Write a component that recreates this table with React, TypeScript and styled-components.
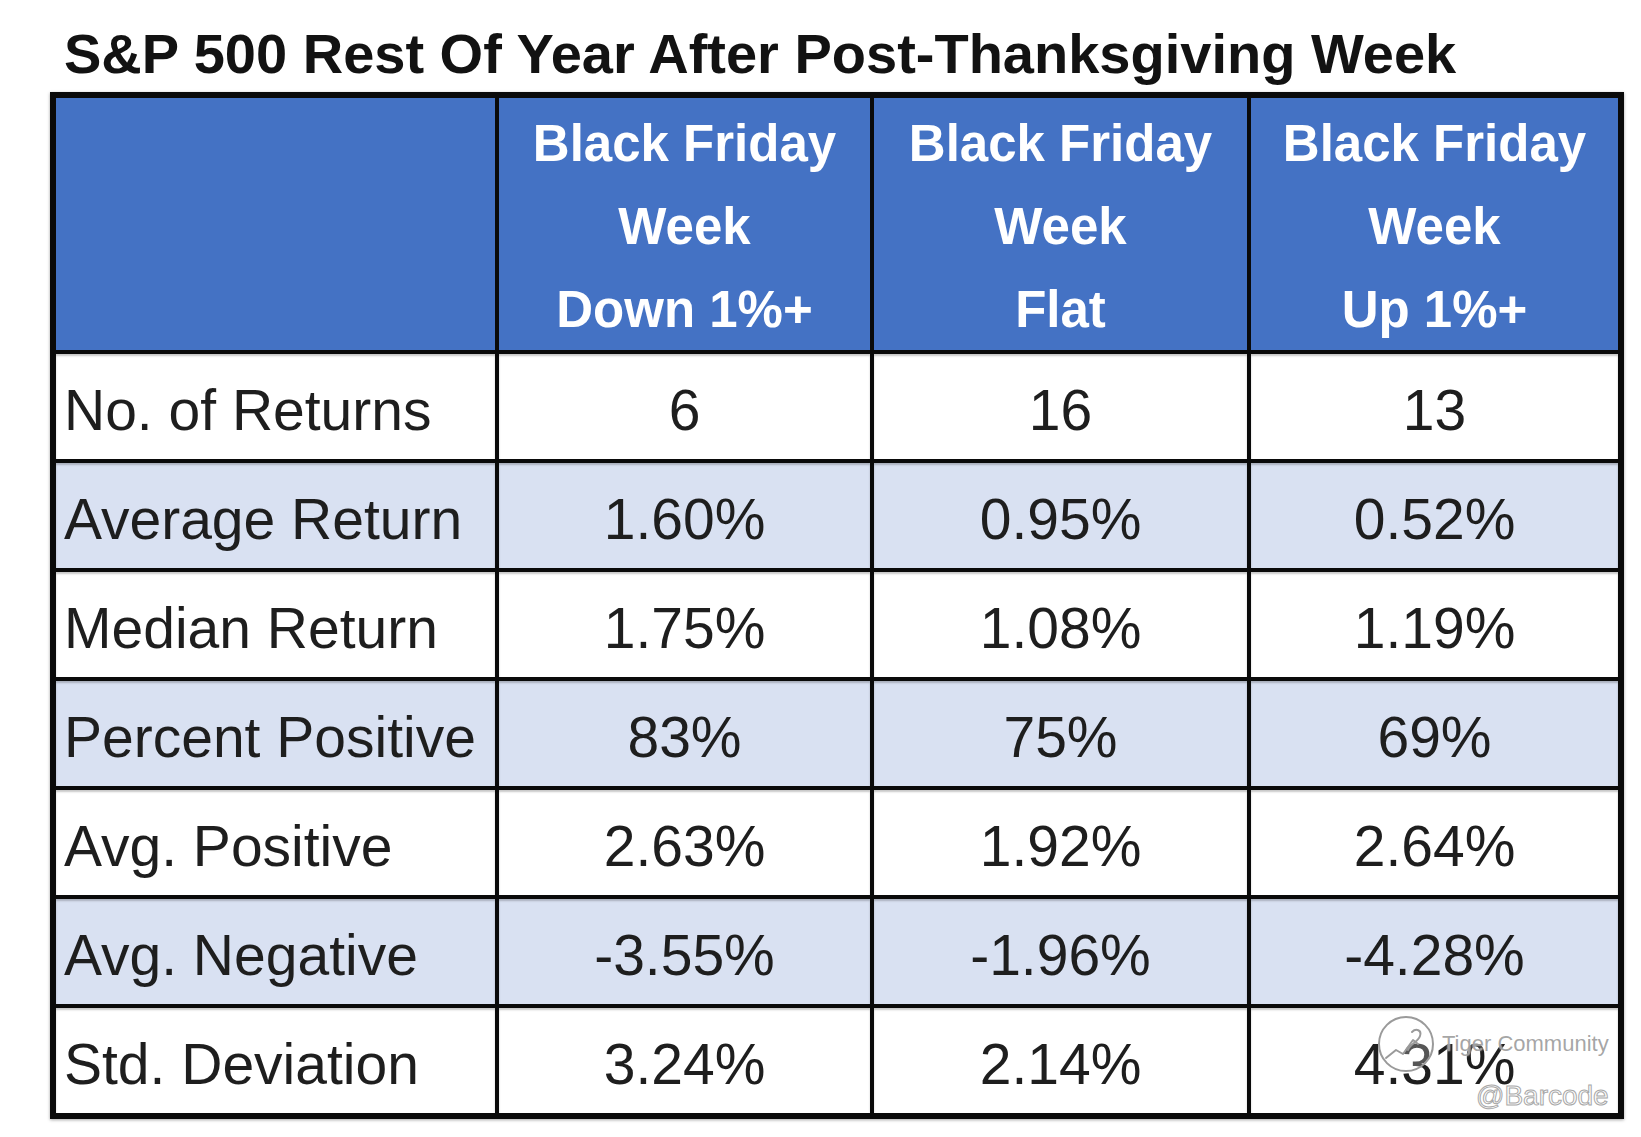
import React from 'react'
import styled, { createGlobalStyle } from 'styled-components'

interface Row {
  label: string
  values: string[]
}

const headers = [
  ['Black Friday', 'Week', 'Down 1%+'],
  ['Black Friday', 'Week', 'Flat'],
  ['Black Friday', 'Week', 'Up 1%+']
]

const rows: Row[] = [
  { label: 'No. of Returns', values: ['6', '16', '13'] },
  { label: 'Average Return', values: ['1.60%', '0.95%', '0.52%'] },
  { label: 'Median Return', values: ['1.75%', '1.08%', '1.19%'] },
  { label: 'Percent Positive', values: ['83%', '75%', '69%'] },
  { label: 'Avg. Positive', values: ['2.63%', '1.92%', '2.64%'] },
  { label: 'Avg. Negative', values: ['-3.55%', '-1.96%', '-4.28%'] },
  { label: 'Std. Deviation', values: ['3.24%', '2.14%', '4.31%'] }
]

const GlobalStyle = createGlobalStyle`
  html, body {
    margin: 0;
    padding: 0;
    background: #ffffff;
  }
  body {
    font-family: "Liberation Sans", Arial, sans-serif;
  }
`

const Page = styled.div`
  position: relative;
  width: 1641px;
  height: 1137px;
  padding: 22px 0 0 50px;
  box-sizing: border-box;
`

const Title = styled.h1`
  margin: 0 0 6px 14px;
  font-size: 56px;
  line-height: 64px;
  font-weight: 700;
  color: #121212;
  letter-spacing: 0;
  white-space: nowrap;
`

const Grid = styled.div`
  display: grid;
  grid-template-columns: 439px 371px 373px 367px;
  grid-template-rows: 252px repeat(7, 105px);
  gap: 4px;
  width: max-content;
  background: #0a0a0a;
  border: 6px solid #0a0a0a;
  box-shadow: 0 1px 3px rgba(0, 0, 0, 0.35);
`

const HeadCell = styled.div`
  background: #4472c4;
  color: #ffffff;
  font-weight: 700;
  font-size: 51px;
  line-height: 83px;
  text-align: center;
  padding-top: 4px;
  overflow: visible;
  white-space: nowrap;
`

const Cell = styled.div<{ $shaded: boolean; $label?: boolean }>`
  display: flex;
  align-items: center;
  justify-content: ${p => (p.$label ? 'flex-start' : 'center')};
  padding: 6px 0 0 ${p => (p.$label ? '8px' : '0')};
  box-sizing: border-box;
  background: ${p => (p.$shaded ? '#d9e1f2' : '#ffffff')};
  box-shadow: inset 0 2px 2px rgba(0, 0, 0, 0.22);
  color: #1e1e1e;
  font-size: 57px;
  white-space: nowrap;
`

const Watermark = styled.div`
  position: absolute;
  left: 1376px;
  top: 1014px;
  display: flex;
  flex-direction: column;
  align-items: flex-end;
  pointer-events: none;
`

const MarkTop = styled.div`
  display: flex;
  align-items: center;
  gap: 6px;
`

const MarkBrand = styled.span`
  font-size: 22px;
  color: rgba(150, 150, 150, 0.85);
  text-shadow: 0 0 2px #ffffff;
  white-space: nowrap;
`

const MarkUser = styled.span`
  margin-top: 6px;
  font-size: 28px;
  color: rgba(255, 255, 255, 0.85);
  -webkit-text-stroke: 1px #a8a8a8;
  white-space: nowrap;
`

const TigerLogo = () => (
  <svg width="60" height="60" viewBox="0 0 60 60" fill="none">
    <circle cx="30" cy="30" r="27" stroke="#9a9a9a" strokeWidth="2" fill="rgba(255,255,255,0.25)" />
    <path d="M10 44 L20 36 L27 40 L37 26 L42 30" stroke="#9a9a9a" strokeWidth="2" strokeLinecap="round" strokeLinejoin="round" />
    <path d="M36 18 C40 14 46 16 44 22 C42 28 34 30 32 36" stroke="#9a9a9a" strokeWidth="2" strokeLinecap="round" />
  </svg>
)

export default function App() {
  return (
    <Page>
      <GlobalStyle />
      <Title>S&amp;P 500 Rest Of Year After Post-Thanksgiving Week</Title>
      <Grid>
        <HeadCell />
        {headers.map((lines, i) => (
          <HeadCell key={i}>
            {lines.map(line => (
              <div key={line}>{line}</div>
            ))}
          </HeadCell>
        ))}
        {rows.map((row, r) => (
          <React.Fragment key={row.label}>
            <Cell $shaded={r % 2 === 1} $label>{row.label}</Cell>
            {row.values.map((v, c) => (
              <Cell key={c} $shaded={r % 2 === 1}>{v}</Cell>
            ))}
          </React.Fragment>
        ))}
      </Grid>
      <Watermark>
        <MarkTop>
          <TigerLogo />
          <MarkBrand>Tiger Community</MarkBrand>
        </MarkTop>
        <MarkUser>@Barcode</MarkUser>
      </Watermark>
    </Page>
  )
}
